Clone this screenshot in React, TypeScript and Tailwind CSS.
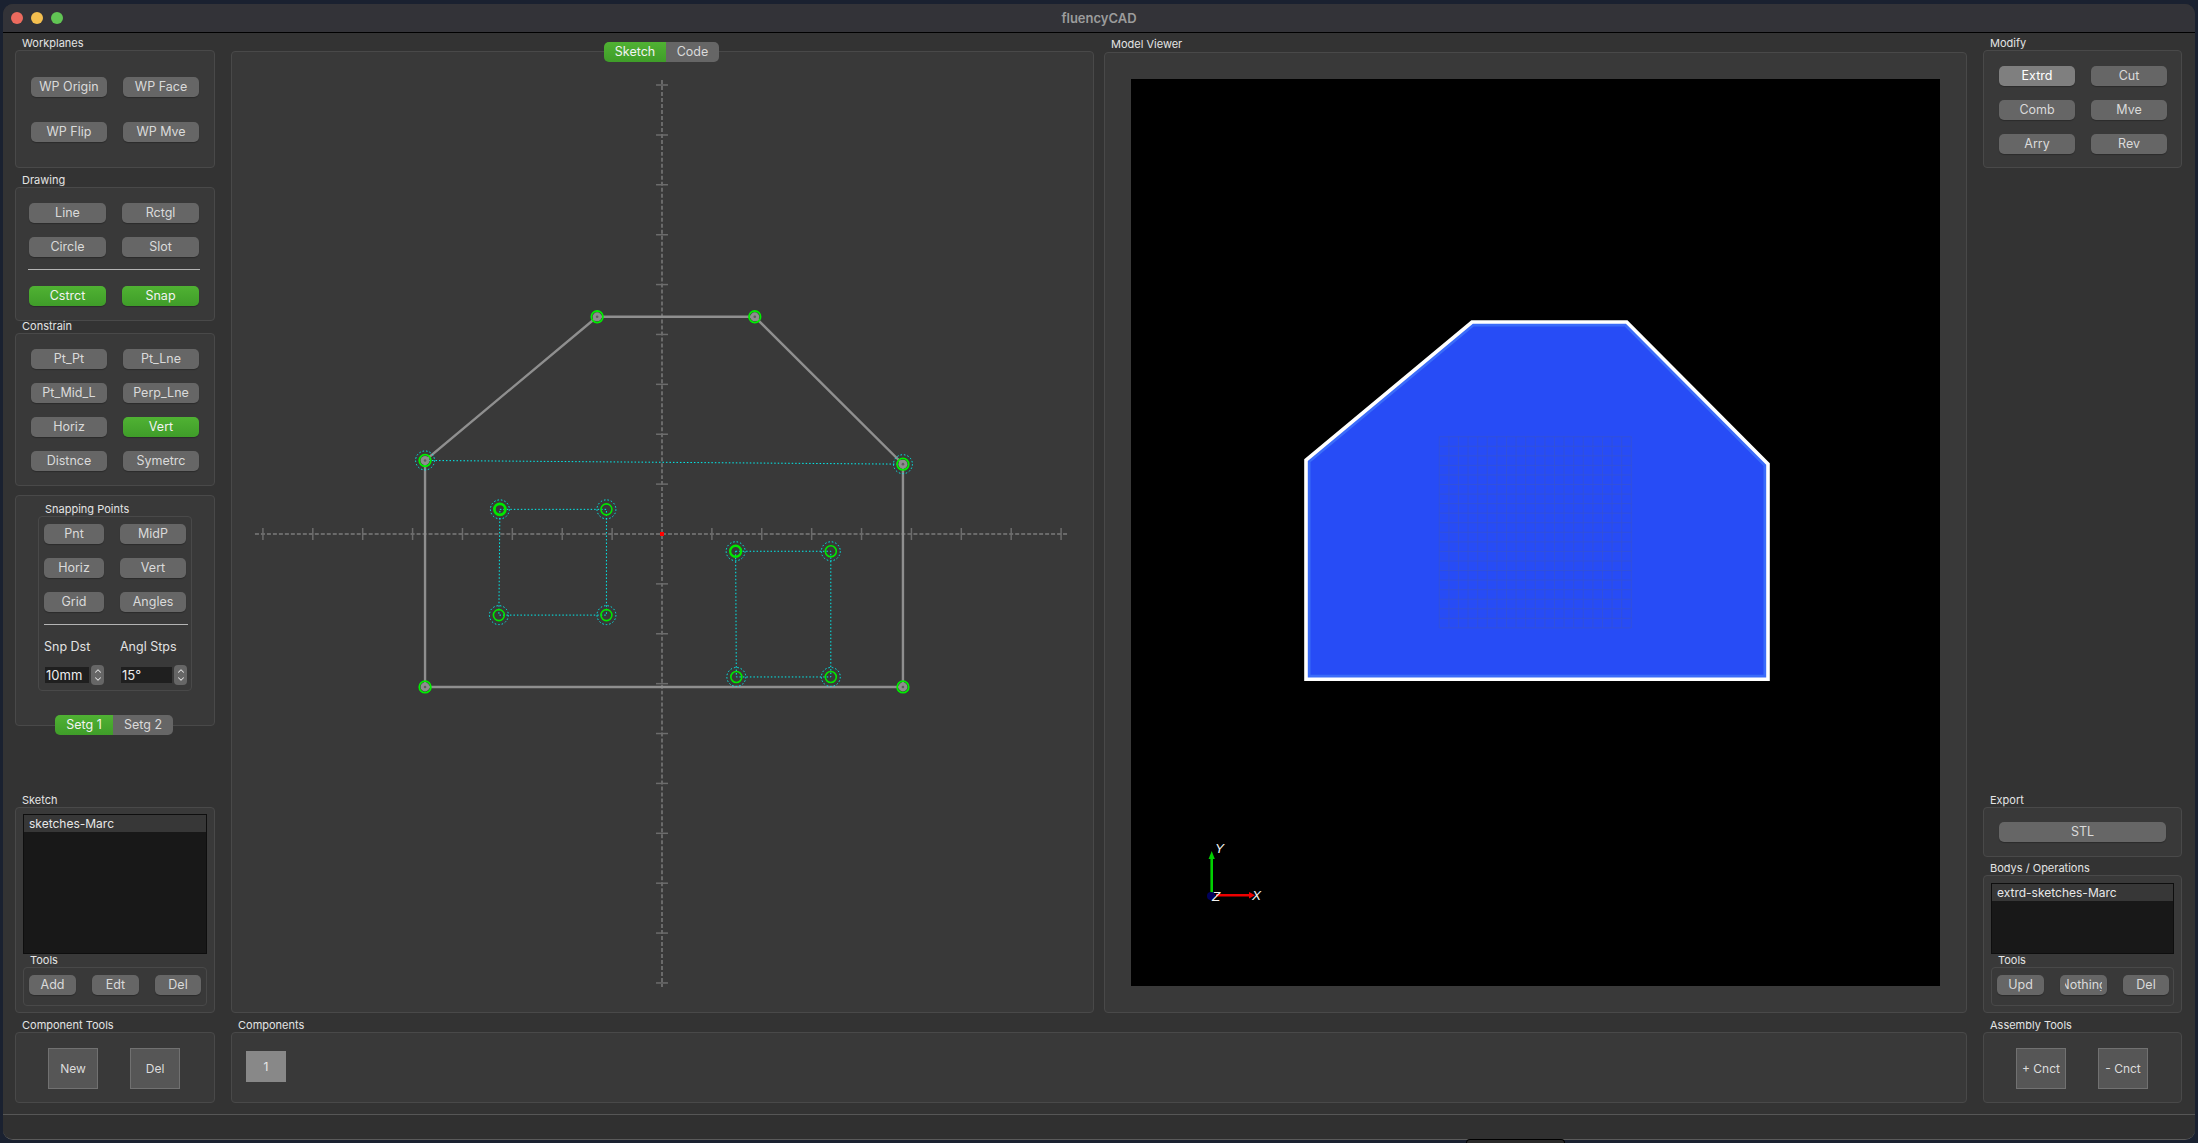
import type { ReactNode } from 'react';
import { ChevronDown, ChevronUp } from 'lucide-react';

function cx(...parts: (string | false | undefined)[]) {
  return parts.filter(Boolean).join(' ');
}

function Btn({ children, className, tone = 'gray' }: { children: ReactNode; className?: string; tone?: 'gray' | 'green' | 'lit' }) {
  return (
    <div
      className={cx(
        'flex h-5 items-center justify-center overflow-hidden whitespace-nowrap rounded-[5px] text-[12.5px] leading-none shadow-[0_1px_1px_rgba(0,0,0,0.25)]',
        tone === 'gray' && 'bg-[#666666] text-[#dadada]',
        tone === 'green' && 'bg-gradient-to-b from-[#50b233] to-[#3f9d29] text-[#f2f2f2]',
        tone === 'lit' && 'bg-[#7f7f7f] text-white',
        className,
      )}
    >
      {children}
    </div>
  );
}

function SquareBtn({ children }: { children: ReactNode }) {
  return (
    <div className="flex h-[41px] w-[50px] items-center justify-center border border-[#717171] bg-[#565656] text-[12px] text-[#dcdcdc]">
      {children}
    </div>
  );
}

function Box({ children, className }: { children?: ReactNode; className?: string }) {
  return <div className={cx('rounded-[4px] border border-[#494949] bg-[#393939]', className)}>{children}</div>;
}

function Label({ children, className }: { children: ReactNode; className?: string }) {
  return <div className={cx('h-[14px] pl-[7px] text-[11px] leading-[14px] text-[#e4e4e4]', className)}>{children}</div>;
}

function Spin({ value, inputWidth, className }: { value: string; inputWidth: string; className?: string }) {
  return (
    <div className={cx('flex items-center', className)}>
      <div className={cx('flex h-4 items-center bg-[#1f1f1f] pl-[1px] text-[13px] leading-none text-[#ececec]', inputWidth)}>{value}</div>
      <div className="ml-[2px] flex h-5 w-[13px] flex-col items-center justify-center rounded-[4px] bg-[#666666] text-[#e4e4e4]">
        <ChevronUp size={10} strokeWidth={2.5} className="-mb-[1px]" />
        <ChevronDown size={10} strokeWidth={2.5} className="-mt-[1px]" />
      </div>
    </div>
  );
}

function ListPanel({ item, height }: { item: string; height: string }) {
  return (
    <div className={cx('border border-[#0e0e0e] bg-[#181818]', height)}>
      <div className="h-[17px] bg-[#373737] pl-[5px] text-[12px] leading-[17px] text-[#e8e8e8]">{item}</div>
    </div>
  );
}

function ToolsRow({ middle, first }: { first: string; middle: ReactNode }) {
  return (
    <>
      <div className="mt-[-1px] h-[14px] pl-[7px] text-[11px] leading-[14px] text-[#e4e4e4]">Tools</div>
      <Box className="h-[39px] pl-[5px] pt-[7px]">
        <div className="flex gap-4">
          <Btn className="w-[47px]">{first}</Btn>
          <Btn className="w-[47px]">{middle}</Btn>
          <Btn className="w-[46px]">Del</Btn>
        </div>
      </Box>
    </>
  );
}

// sketch canvas uses page coordinates so points are easy to check against the screenshot
const OUTLINE = '424.5,687.3 903.5,687.3 903.5,464 755,316.3 597,316.3 424.5,460.3';
const OUTLINE_NODES: [number, number, boolean][] = [
  [424.5, 687.3, false],
  [903.5, 687.3, false],
  [903.5, 464, true],
  [755, 316.3, false],
  [597, 316.3, false],
  [424.5, 460.3, true],
];
const RECT_A = '499.5,509.3 606.3,509.3 606.3,615.3 498.5,615.3';
const RECT_B = '735.8,551.3 831.2,551.3 831.2,677.3 736.5,677.3';
const INNER_NODES: [number, number, number][] = [
  [499.5, 509.3, 2.8],
  [606.3, 509.3, 1.6],
  [606.3, 615.3, 1.6],
  [498.5, 615.3, 1.6],
  [735.8, 551.3, 2.3],
  [831.2, 551.3, 1.6],
  [831.2, 677.3, 1.6],
  [736.5, 677.3, 1.6],
];

function SketchCanvas() {
  const steps = Array.from({ length: 19 }, (_, i) => i - 9);
  return (
    <svg viewBox="231 51 863 962" className="block h-full w-full">
      <g stroke="#7b7b7b" strokeWidth="1.5" fill="none">
        <line x1="254" y1="534" x2="1070" y2="534" strokeDasharray="4 2" />
        <line x1="662" y1="79" x2="662" y2="988" strokeDasharray="4 2" />
      </g>
      <g stroke="#6c6c6c" strokeWidth="1.5">
        {steps.filter((k) => k !== 0 && Math.abs(k) < 9).map((k) => (
          <line key={`h${k}`} x1={662 + k * 50} y1="528" x2={662 + k * 50} y2="540" />
        ))}
        {steps.filter((k) => k !== 0).map((k) => (
          <line key={`v${k}`} x1="656" y1={534 + k * 50} x2="668" y2={534 + k * 50} />
        ))}
      </g>
      <polygon points={OUTLINE} fill="none" stroke="#8f8f8f" strokeWidth="2.4" />
      <g stroke="#00f0f0" strokeWidth="1" strokeDasharray="1.5 2" fill="none">
        <line x1="424.5" y1="460.3" x2="903.5" y2="464" />
        <polygon points={RECT_A} />
        <polygon points={RECT_B} />
      </g>
      {OUTLINE_NODES.map(([x, y, ring]) => (
        <g key={`${x}-${y}`}>
          {ring && <circle cx={x} cy={y} r="9.5" fill="none" stroke="#00f0f0" strokeWidth="1" strokeDasharray="1.5 2" />}
          <circle cx={x} cy={y} r="4.5" fill="#8e8e8e" />
          <circle cx={x} cy={y} r="1.3" fill="#5e5e5e" />
          <circle cx={x} cy={y} r="5.8" fill="none" stroke="#00ee00" strokeWidth="1.8" />
        </g>
      ))}
      {INNER_NODES.map(([x, y, w]) => (
        <g key={`${x}-${y}`}>
          <circle cx={x} cy={y} r="9.5" fill="none" stroke="#00f0f0" strokeWidth="1" strokeDasharray="1.5 2" />
          <circle cx={x} cy={y} r="5.5" fill="none" stroke="#00e800" strokeWidth={w} />
        </g>
      ))}
      <rect x="660" y="532" width="4" height="4" fill="#ff0000" />
    </svg>
  );
}

function ModelCanvas() {
  const solid = '1306,679.3 1768,679.3 1768,464 1626.7,322 1472,322 1306,460';
  const cells = Array.from({ length: 21 }, (_, i) => i);
  return (
    <svg viewBox="1131 79 809 907" className="block h-full w-full bg-black">
      <defs>
        <clipPath id="solid-clip">
          <polygon points={solid} />
        </clipPath>
      </defs>
      <polygon points={solid} fill="#274cf6" />
      <polygon points={solid} fill="none" stroke="#3b6cf9" strokeWidth="9" clipPath="url(#solid-clip)" />
      <g stroke="#3351d8" strokeWidth="0.9">
        {cells.map((i) => (
          <line key={`x${i}`} x1={1439.3 + i * 9.6} y1="436.7" x2={1439.3 + i * 9.6} y2="628" />
        ))}
        {cells.map((i) => (
          <line key={`y${i}`} x1="1439.3" y1={436.7 + i * 9.56} x2="1631.3" y2={436.7 + i * 9.56} />
        ))}
      </g>
      <polygon points={solid} fill="none" stroke="#ffffff" strokeWidth="3.6" />
      <line x1="1211.7" y1="895" x2="1211.7" y2="856" stroke="#00d000" strokeWidth="2.6" />
      <polygon points="1211.7,851 1208.6,859 1214.8,859" fill="#00d000" />
      <line x1="1216" y1="895.3" x2="1250" y2="895.3" stroke="#ee0000" strokeWidth="2.6" />
      <polygon points="1255,895.3 1249,892 1249,898.6" fill="#ee0000" />
      <circle cx="1211" cy="896" r="4" fill="#00005c" />
      <g fill="#f2f2f2" fontSize="13.5" fontStyle="italic" className="font-['Liberation_Sans',sans-serif]">
        <text x="1215" y="853">Y</text>
        <text x="1252" y="900">X</text>
        <text x="1212" y="900.5">Z</text>
      </g>
    </svg>
  );
}

export default function App() {
  return (
    <div className="relative h-[1143px] w-[2198px] overflow-hidden bg-[#1a2130] px-[3px] pb-[3px] pt-[4px] font-['Inter','Noto_Sans',sans-serif]">
      <div className="flex h-full flex-col overflow-hidden rounded-[10px] border-b border-[#5a5a5a] bg-[#333333]">
        {/* title bar */}
        <div className="relative flex h-[29px] shrink-0 items-center justify-center border-b border-black bg-[#333338]">
          <div className="absolute left-[8px] top-[8px] flex gap-2">
            <span className="h-3 w-3 rounded-full bg-[#ec6a5e]" />
            <span className="h-3 w-3 rounded-full bg-[#f4bf4f]" />
            <span className="h-3 w-3 rounded-full bg-[#61c554]" />
          </div>
          <span className="text-[13px] font-semibold leading-none text-[#9c9c9c]">fluencyCAD</span>
        </div>

        {/* main area */}
        <div className="flex h-[980px] shrink-0 pl-[12px] pr-[13px] pt-[3px]">
          {/* left tools */}
          <div className="flex w-[200px] shrink-0 flex-col">
            <Label>Workplanes</Label>
            <Box className="h-[118px] px-[15px] pt-[26px]">
              <div className="grid grid-cols-[76px_76px] gap-x-4 gap-y-[25px]">
                <Btn>WP Origin</Btn>
                <Btn>WP Face</Btn>
                <Btn>WP Flip</Btn>
                <Btn>WP Mve</Btn>
              </div>
            </Box>

            <Label className="mt-[5px]">Drawing</Label>
            <Box className="h-[134px] pl-[13px] pt-[15px]">
              <div className="grid grid-cols-[77px_77px] gap-x-4 gap-y-[14px]">
                <Btn>Line</Btn>
                <Btn>Rctgl</Btn>
                <Btn>Circle</Btn>
                <Btn>Slot</Btn>
              </div>
              <div className="mb-[16px] ml-[-1px] mt-[12px] h-px w-[172px] bg-[#b4b4b4]" />
              <div className="grid grid-cols-[77px_77px] gap-x-4">
                <Btn tone="green">Cstrct</Btn>
                <Btn tone="green">Snap</Btn>
              </div>
            </Box>

            <Label className="mt-[-2px]">Constrain</Label>
            <Box className="h-[153px] px-[15px] pt-[15px]">
              <div className="grid grid-cols-[76px_76px] gap-x-4 gap-y-[14px]">
                <Btn>Pt_Pt</Btn>
                <Btn>Pt_Lne</Btn>
                <Btn>Pt_Mid_L</Btn>
                <Btn>Perp_Lne</Btn>
                <Btn>Horiz</Btn>
                <Btn tone="green">Vert</Btn>
                <Btn>Distnce</Btn>
                <Btn>Symetrc</Btn>
              </div>
            </Box>

            <Box className="relative mt-[9px] h-[231px] pl-[22px] pt-[6px]">
              <div className="h-[14px] pl-[7px] text-[11px] leading-[14px] text-[#e4e4e4]">Snapping Points</div>
              <Box className="h-[175px] w-[154px] pl-[5px] pt-[7px]">
                <div className="grid grid-cols-[60px_66px] gap-x-4 gap-y-[14px]">
                  <Btn>Pnt</Btn>
                  <Btn>MidP</Btn>
                  <Btn>Horiz</Btn>
                  <Btn>Vert</Btn>
                  <Btn>Grid</Btn>
                  <Btn>Angles</Btn>
                </div>
                <div className="mb-[14px] mt-[12px] h-px w-[144px] bg-[#b4b4b4]" />
                <div className="grid grid-cols-[76px_70px] text-[12.5px] leading-[16px] text-[#e2e2e2]">
                  <span>Snp Dst</span>
                  <span>Angl Stps</span>
                </div>
                <div className="mt-[10px] grid grid-cols-[76px_70px]">
                  <Spin value="10mm" inputWidth="w-[44px]" className="pl-[1px]" />
                  <Spin value="15°" inputWidth="w-[51px]" className="pl-[1px]" />
                </div>
              </Box>
              {/* tab strip sits on the box border */}
              <div className="absolute left-[39px] top-[219px] flex h-5 w-[118px] overflow-hidden rounded-[5px] text-[12.5px] leading-5">
                <div className="w-[58px] bg-gradient-to-b from-[#50b233] to-[#3f9d29] text-center text-[#f2f2f2]">Setg 1</div>
                <div className="w-[60px] bg-[#666666] text-center text-[#dadada]">Setg 2</div>
              </div>
            </Box>

            <Label className="mt-auto">Sketch</Label>
            <Box className="h-[206px] px-[7px] pt-[6px]">
              <ListPanel item="sketches-Marc" height="h-[140px]" />
              <ToolsRow first="Add" middle="Edt" />
            </Box>
          </div>

          {/* sketch panel */}
          <div className="relative ml-4 w-[863px] shrink-0 pt-[15px]">
            <Box className="h-[962px] overflow-hidden">
              <SketchCanvas />
            </Box>
            <div className="absolute left-[373px] top-[6px] flex h-5 w-[115px] overflow-hidden rounded-[5px] text-[12.5px] leading-5">
              <div className="w-[62px] bg-gradient-to-b from-[#50b233] to-[#3f9d29] text-center text-[#f2f2f2]">Sketch</div>
              <div className="w-[53px] bg-[#666666] text-center text-[#dadada]">Code</div>
            </div>
          </div>

          {/* model viewer */}
          <div className="ml-[10px] flex w-[863px] shrink-0 flex-col pt-[1px]">
            <Label className="mb-[1px] text-[11.6px]">Model Viewer</Label>
            <Box className="h-[961px] pb-[26px] pl-[26px] pr-[26px] pt-[26px]">
              <ModelCanvas />
            </Box>
          </div>

          {/* right tools */}
          <div className="ml-4 flex w-[199px] shrink-0 flex-col">
            <Label>Modify</Label>
            <Box className="h-[118px] px-[15px] pt-[15px]">
              <div className="grid grid-cols-[76px_76px] gap-x-4 gap-y-[14px]">
                <Btn tone="lit">Extrd</Btn>
                <Btn>Cut</Btn>
                <Btn>Comb</Btn>
                <Btn>Mve</Btn>
                <Btn>Arry</Btn>
                <Btn>Rev</Btn>
              </div>
            </Box>

            <Label className="mt-auto">Export</Label>
            <Box className="h-[50px] px-[15px] pt-[14px]">
              <Btn>STL</Btn>
            </Box>
            <Label className="mt-[4px]">Bodys / Operations</Label>
            <Box className="h-[138px] px-[7px] pt-[7px]">
              <ListPanel item="extrd-sketches-Marc" height="h-[71px]" />
              <ToolsRow
                first="Upd"
                middle={
                  <span className="flex w-[37px] justify-center overflow-hidden">
                    <span>Nothing</span>
                  </span>
                }
              />
            </Box>
          </div>
        </div>

        {/* bottom row */}
        <div className="flex shrink-0 pl-[12px] pr-[13px] pt-[5px]">
          <div className="w-[200px] shrink-0">
            <Label>Component Tools</Label>
            <Box className="flex h-[71px] gap-8 pl-[32px] pt-[15px]">
              <SquareBtn>New</SquareBtn>
              <SquareBtn>Del</SquareBtn>
            </Box>
          </div>
          <div className="ml-4 w-[1736px] shrink-0">
            <Label>Components</Label>
            <Box className="h-[71px] pl-[14px] pt-[18px]">
              <div className="flex h-[31px] w-10 items-center justify-center bg-[#888888] text-[12px] text-[#e8e8e8]">1</div>
            </Box>
          </div>
          <div className="ml-4 w-[199px] shrink-0">
            <Label>Assembly Tools</Label>
            <Box className="flex h-[71px] gap-8 pl-[32px] pt-[15px]">
              <SquareBtn>+ Cnct</SquareBtn>
              <SquareBtn>- Cnct</SquareBtn>
            </Box>
          </div>
        </div>

        {/* status bar */}
        <div className="mt-[11px] min-h-0 flex-1 border-t border-[#565656] bg-[#303030]" />
      </div>

      {/* edge of the dock peeking in under the window */}
      <div className="absolute bottom-0 left-[1466px] h-[4px] w-[99px] rounded-t-[5px] border-x border-t border-black bg-[#2b2b2b]" />
    </div>
  );
}
